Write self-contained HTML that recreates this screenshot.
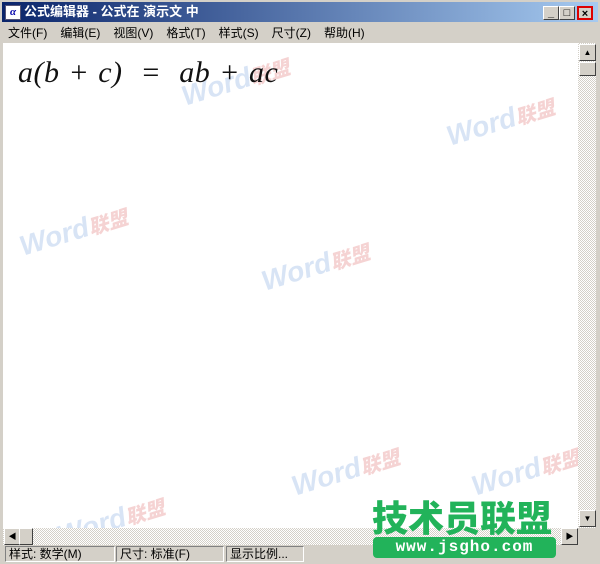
<!DOCTYPE html>
<html><head><meta charset="utf-8"><style>
*{margin:0;padding:0;box-sizing:border-box}
body{width:600px;height:564px;position:relative;overflow:hidden;background:#d4d0c8;font-family:"Liberation Sans","Noto Sans CJK SC",sans-serif;font-size:12px}
.title{position:absolute;left:2px;top:2px;width:596px;height:20px;background:linear-gradient(90deg,#0a246a,#a6caf0);color:#fff;font-weight:bold;font-size:13px;line-height:20px;padding-left:22px}
.ico{position:absolute;left:3px;top:3px;width:16px;height:15px;background:#fff;border:1px solid #557;color:#00a;font-size:11px;line-height:13px;text-align:center;font-family:"Liberation Serif",serif;font-style:italic}
.btn{position:absolute;top:4px;width:16px;height:14px;background:#d4d0c8;border:1px solid;border-color:#fff #404040 #404040 #fff;color:#000;font-size:11px;line-height:12px;text-align:center;font-weight:bold}
.menu{position:absolute;left:8px;top:24px;font-size:12px;color:#000;word-spacing:0}
.menu span{margin-right:13px}
.content{position:absolute;left:3px;top:43px;width:575px;height:485px;background:#fff}
.eq{position:absolute;left:18px;top:56px;font-family:"Liberation Serif",serif;font-style:italic;font-size:30px;color:#111;white-space:pre;word-spacing:1px;letter-spacing:0.5px}
.vs{position:absolute;left:578px;top:43px;width:18px;height:485px;background:#e8e6e0 repeating-conic-gradient(#d4d0c8 0 25%,#fff 0 50%) 0 0/2px 2px}
.hs{position:absolute;left:3px;top:528px;width:575px;height:17px;background:repeating-conic-gradient(#d4d0c8 0 25%,#fff 0 50%) 0 0/2px 2px}
.sb{position:absolute;width:17px;height:17px;background:#d4d0c8;border:1px solid;border-color:#fff #404040 #404040 #fff;font-size:8px;text-align:center;line-height:15px}
.status{position:absolute;top:546px;height:16px;border:1px solid;border-color:#808080 #fff #fff #808080;font-size:12px;line-height:14px;padding-left:3px;color:#000}
.wm{position:absolute;color:#7fa8e0;opacity:.3;font-weight:bold;font-size:28px;transform:rotate(-17deg);white-space:nowrap;font-style:italic}
.wm b{color:#e07070;font-size:20px}
.logo{position:absolute;left:372px;top:495px;color:#22b35a;font-size:36px;font-weight:900;letter-spacing:0px;font-family:"Noto Sans CJK SC",sans-serif;line-height:42px}
.url{position:absolute;left:373px;top:537px;width:183px;height:21px;background:#22b35a;border-radius:4px;color:#fff;font-size:16px;font-weight:bold;text-align:center;line-height:21px;letter-spacing:1px;font-family:"Liberation Mono",monospace}
</style></head><body>
<div class="title"><div class="ico">α</div>公式编辑器 - 公式在 演示文 中
<div class="btn" style="left:541px">_</div><div class="btn" style="left:557px">□</div><div class="btn" style="left:575px;border:2px solid #d00">×</div></div>
<div class="menu"><span>文件(F)</span><span>编辑(E)</span><span>视图(V)</span><span>格式(T)</span><span>样式(S)</span><span>尺寸(Z)</span><span>帮助(H)</span></div>
<div class="content"></div>
<div class="wm" style="left:180px;top:65px">Word<b>联盟</b></div>
<div class="wm" style="left:445px;top:105px">Word<b>联盟</b></div>
<div class="wm" style="left:18px;top:215px">Word<b>联盟</b></div>
<div class="wm" style="left:260px;top:250px">Word<b>联盟</b></div>
<div class="wm" style="left:290px;top:455px">Word<b>联盟</b></div>
<div class="wm" style="left:470px;top:455px">Word<b>联盟</b></div>
<div class="wm" style="left:55px;top:505px">Word<b>联盟</b></div>
<div class="eq">a(b + c)  =  ab + ac</div>
<div class="vs"></div>
<div class="sb" style="left:579px;top:44px">▲</div>
<div class="sb" style="left:579px;top:62px;height:14px"></div>
<div class="sb" style="left:579px;top:510px">▼</div>
<div class="hs"></div>
<div class="sb" style="left:4px;top:528px">◀</div>
<div class="sb" style="left:19px;top:528px;width:14px"></div>
<div class="sb" style="left:561px;top:528px">▶</div>
<div class="status" style="left:5px;width:110px">样式: 数学(M)</div>
<div class="status" style="left:116px;width:108px">尺寸: 标准(F)</div>
<div class="status" style="left:226px;width:78px">显示比例...</div>
<div class="logo">技术员联盟</div>
<div class="url">www.jsgho.com</div>
</body></html>
